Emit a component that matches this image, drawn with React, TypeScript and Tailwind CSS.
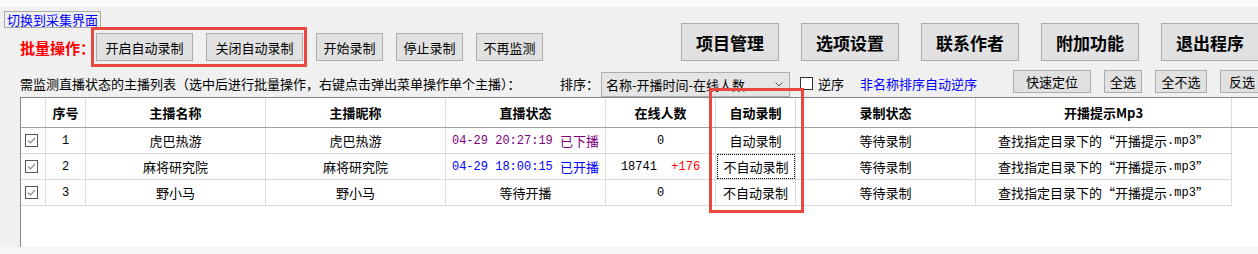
import React from 'react';

type Row = {
  id: number;
  name: string;
  nick: string;
  time?: string;
  state: string;
  stateColor: string;
  online: string;
  delta?: string;
  auto: string;
  focused?: boolean;
};

const rows: Row[] = [
  { id: 1, name: '虎巴热游', nick: '虎巴热游', time: '04-29 20:27:19', state: '已下播', stateColor: 'text-[#800080]', online: '0', auto: '自动录制' },
  { id: 2, name: '麻将研究院', nick: '麻将研究院', time: '04-29 18:00:15', state: '已开播', stateColor: 'text-[#0000ff]', online: '18741', delta: '+176', auto: '不自动录制', focused: true },
  { id: 3, name: '野小马', nick: '野小马', state: '等待开播', stateColor: 'text-black', online: '0', auto: '不自动录制' },
];

const headers = [
  { label: '', w: 'w-[25px]' },
  { label: '序号', w: 'w-[40px]' },
  { label: '主播名称', w: 'w-[180px]' },
  { label: '主播昵称', w: 'w-[180px]' },
  { label: '直播状态', w: 'w-[160px]' },
  { label: '在线人数', w: 'w-[110px]' },
  { label: '自动录制', w: 'w-[80px]' },
  { label: '录制状态', w: 'w-[180px]' },
  { label: '开播提示Mp3', w: 'w-[256px]' },
];

const bigButtons = ['项目管理', '选项设置', '联系作者', '附加功能', '退出程序'];

const btn = 'h-[28px] shrink-0 border border-[#adadad] bg-[#e1e1e1] flex items-center justify-center text-[13px]';
const cell = 'shrink-0 h-full border-r border-[#dcdcdc] flex items-center justify-center';
const mono = "font-['Liberation_Mono',monospace] text-[12px]";

const Check: React.FC<{ checked?: boolean }> = ({ checked }) => (
  <svg width="13" height="13" viewBox="0 0 13 13">
    <rect x="0.5" y="0.5" width="12" height="12" fill="white" stroke={checked ? '#555' : '#333'} />
    {checked && <path d="M3 6.5 L5.5 9 L10 4" stroke="#8a8a8a" strokeWidth="1.2" fill="none" />}
  </svg>
);

const App: React.FC = () => {
  return (
    <div className="relative w-[1258px] h-[254px] overflow-hidden bg-[#f7f7f7] text-black leading-none font-['Noto_Sans_CJK_SC',sans-serif]">
      <div className="h-[7px] bg-[#f9f9f9]" />
      <div className="h-[240px] bg-[#f0f0f0]">
        {/* top section */}
        <div className="flex h-[63px]">
          <div className="w-[681px] shrink-0">
            <div className="ml-[4px] mt-[4px] h-[17px] w-[97px] border border-[#a9a9a9] bg-[#f0f0f0] flex items-center justify-center text-[13px] text-[#0000ff]">
              切换到采集界面
            </div>
            <div className="flex items-center h-[40px] -mt-px">
              <div className="ml-[20px] w-[71px] text-[15px] font-bold text-[#ff0000] whitespace-nowrap">批量操作：</div>
              <div className="w-[216px] h-[40px] border-[3px] border-[#e8483f] pl-[2px] pt-[3px] flex gap-[13px]">
                <div className={`${btn} w-[97px]`}>开启自动录制</div>
                <div className={`${btn} w-[97px]`}>关闭自动录制</div>
              </div>
              <div className="ml-[9px] flex gap-[13px]">
                <div className={`${btn} w-[67px]`}>开始录制</div>
                <div className={`${btn} w-[67px]`}>停止录制</div>
                <div className={`${btn} w-[67px]`}>不再监测</div>
              </div>
            </div>
          </div>
          <div className="flex gap-[22px] pt-[16px]">
            {bigButtons.map((b) => (
              <div
                key={b}
                className="w-[98px] h-[38px] shrink-0 border border-[#adadad] bg-[#e1e1e1] flex items-center justify-center text-[17px] font-bold"
              >
                {b}
              </div>
            ))}
          </div>
        </div>

        {/* list toolbar */}
        <div className="flex items-center h-[27px] text-[13px]">
          <div className="ml-[20px] w-[540px] shrink-0 whitespace-nowrap">
            需监测直播状态的主播列表（选中后进行批量操作，右键点击弹出菜单操作单个主播）：
          </div>
          <div className="w-[41px] shrink-0">排序：</div>
          <div className="self-start mt-[2px] w-[189px] h-[25px] shrink-0 border border-[#adadad] bg-[#e5e5e5] flex items-center justify-between pl-[4px] pr-[6px]">
            <span>名称-开播时间-在线人数</span>
            <svg width="8" height="5" viewBox="0 0 8 5">
              <path d="M0.5 0.5 L4 4 L7.5 0.5" stroke="#555" fill="none" />
            </svg>
          </div>
          <div className="ml-[10px] w-[13px] h-[13px] shrink-0">
            <Check />
          </div>
          <div className="ml-[5px] w-[42px] shrink-0">逆序</div>
          <div className="w-[153px] shrink-0 text-[#0000ff]">非名称排序自动逆序</div>
          <div className="self-start h-[23px] w-[78px] shrink-0 border border-[#adadad] bg-[#e1e1e1] flex items-center justify-center">快速定位</div>
          <div className="self-start ml-[13px] h-[23px] w-[38px] shrink-0 border border-[#adadad] bg-[#e1e1e1] flex items-center justify-center">全选</div>
          <div className="self-start ml-[13px] h-[23px] w-[52px] shrink-0 border border-[#adadad] bg-[#e1e1e1] flex items-center justify-center">全不选</div>
          <div className="self-start ml-[13px] h-[23px] w-[44px] shrink-0 border border-[#adadad] bg-[#e1e1e1] flex items-center justify-center">反选</div>
        </div>

        {/* table */}
        <div className="ml-[20px] w-[1250px] h-[150px] bg-white border-l border-t border-[#828790] text-[13px]">
          <div className="flex h-[30px] border-b border-[#a0a0a0]">
            {headers.map((h) => (
              <div key={h.w + h.label} className={`${cell} ${h.w} font-bold`}>
                {h.label}
              </div>
            ))}
          </div>
          {rows.map((r) => (
            <div key={r.id} className="flex w-[1211px] h-[26px] border-b border-[#d9d9d9]">
              <div className={`${cell} w-[25px] !justify-start pl-[4px]`}>
                <Check checked />
              </div>
              <div className={`${cell} w-[40px] ${mono}`}>{r.id}</div>
              <div className={`${cell} w-[180px]`}>{r.name}</div>
              <div className={`${cell} w-[180px]`}>{r.nick}</div>
              <div className={`${cell} w-[160px] ${r.stateColor} whitespace-pre`}>
                {r.time && <span className={mono}>{r.time} </span>}
                <span>{r.state}</span>
              </div>
              <div className={`${cell} w-[110px] whitespace-pre ${mono}`}>
                {r.online}
                {r.delta && <span className="text-[#ff0000]">{'  ' + r.delta}</span>}
              </div>
              <div className={`${cell} w-[80px]`}>
                {r.focused ? (
                  <div className="ml-px w-full h-full border border-dotted border-black flex items-center justify-center">
                    {r.auto}
                  </div>
                ) : (
                  r.auto
                )}
              </div>
              <div className={`${cell} w-[180px]`}>等待录制</div>
              <div className={`${cell} w-[256px]`}>
                查找指定目录下的“开播提示<span className={mono}>.mp3</span>”
              </div>
            </div>
          ))}
        </div>
      </div>

      {/* annotation around the auto-record column */}
      <div className="absolute left-[709px] top-[88px] w-[95px] h-[125px] border-[3px] border-[#e8483f]" />
    </div>
  );
};

export default App;
